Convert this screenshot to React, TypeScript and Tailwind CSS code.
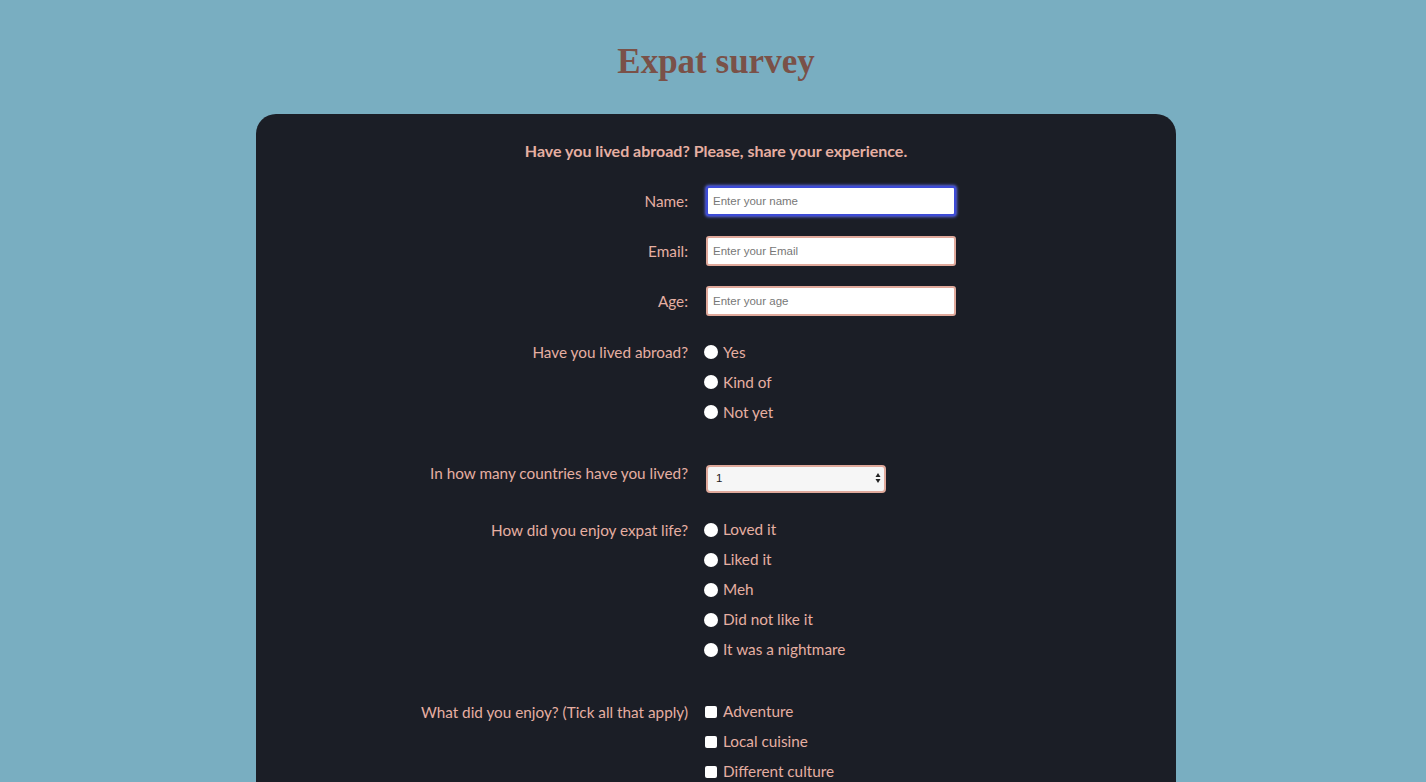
import { useState } from "react";

const labelCls = "w-[432px] shrink-0 text-right text-[15.3px] text-[#e6afa2]";
const fieldFont = { fontFamily: "'Liberation Sans', Arial, sans-serif" };

function TextRow({ label, placeholder, focused }: { label: string; placeholder: string; focused?: boolean }) {
  return (
    <div className="flex items-center h-[30px]">
      <label className={`${labelCls} leading-[30px]`}>{label}</label>
      <input
        type="text"
        placeholder={placeholder}
        style={fieldFont}
        className={`ml-[18px] w-[250px] h-[30px] rounded-[3px] bg-white px-[5px] text-[11.5px] text-[#333] placeholder:text-[#777] outline-none border-2 ${
          focused ? "border-[#3d4bd6] shadow-[0_0_3px_1px_#5a67e8]" : "border-[#e0a99b]"
        }`}
      />
    </div>
  );
}

function RadioGroup({ label, options, box }: { label: string; options: string[]; box?: boolean }) {
  const [picked, setPicked] = useState<string[]>([]);
  return (
    <div className="flex items-start">
      <div className={`${labelCls} leading-[30px]`}>{label}</div>
      <div className="ml-[16px] flex flex-col">
        {options.map((o) => (
          <label
            key={o}
            className="flex items-center h-[30px] cursor-pointer text-[15.3px] text-[#e6afa2]"
            onClick={() => setPicked(box ? (picked.includes(o) ? picked.filter((p) => p !== o) : [...picked, o]) : [o])}
          >
            {box ? (
              <span className="ml-[1px] w-[12px] h-[12px] rounded-[2px] bg-white mr-[6px] flex items-center justify-center">
                {picked.includes(o) && <span className="w-[6px] h-[6px] bg-[#1b1e26]" />}
              </span>
            ) : (
              <span className="w-[14px] h-[14px] rounded-full bg-white mr-[5px] flex items-center justify-center">
                {picked.includes(o) && <span className="w-[6px] h-[6px] rounded-full bg-[#1b1e26]" />}
              </span>
            )}
            {o}
          </label>
        ))}
      </div>
    </div>
  );
}

export default function App() {
  return (
    <div className="h-screen overflow-hidden bg-[#79aec1] pl-[6px]" style={{ fontFamily: "Lato, 'Open Sans', sans-serif" }}>
      <h1
        className="text-center text-[35px] font-bold text-[#7a5148] pt-[40px] leading-[44px]"
        style={{ fontFamily: "'Liberation Serif', 'DejaVu Serif', serif" }}
      >
        Expat survey
      </h1>
      <form className="mx-auto mt-[30px] w-[920px] rounded-[20px] bg-[#1b1e26] pt-[27px] pb-16">
        <p className="text-center text-[16px] font-bold leading-[20px] text-[#e6afa2]">
          Have you lived abroad? Please, share your experience.
        </p>
        <div className="mt-[25px] flex flex-col gap-[20px]">
          <TextRow label="Name:" placeholder="Enter your name" focused />
          <TextRow label="Email:" placeholder="Enter your Email" />
          <TextRow label="Age:" placeholder="Enter your age" />
        </div>
        <div className="mt-[21px]">
          <RadioGroup label="Have you lived abroad?" options={["Yes", "Kind of", "Not yet"]} />
        </div>
        <div className="mt-[37px] flex items-start">
          <label className={`${labelCls} leading-[18px]`}>In how many countries have you lived?</label>
          <div className="relative ml-[18px]">
            <select
              style={fieldFont}
              className="appearance-none w-[180px] h-[28px] rounded-[4px] border-2 border-[#e0a99b] bg-[#f6f6f6] pl-[8px] text-[11.5px] text-[#222] outline-none"
            >
              <option>1</option>
              <option>2</option>
              <option>3</option>
              <option>4</option>
              <option>5+</option>
            </select>
            <svg className="pointer-events-none absolute right-[5px] top-[8px]" width="6" height="12" viewBox="0 0 6 12">
              <path d="M3 1 L5.5 5 L0.5 5 Z" fill="#222" />
              <path d="M3 11 L5.5 7 L0.5 7 Z" fill="#222" />
            </svg>
          </div>
        </div>
        <div className="mt-[22px]">
          <RadioGroup
            label="How did you enjoy expat life?"
            options={["Loved it", "Liked it", "Meh", "Did not like it", "It was a nightmare"]}
          />
        </div>
        <div className="mt-[32px]">
          <RadioGroup
            box
            label="What did you enjoy? (Tick all that apply)"
            options={["Adventure", "Local cuisine", "Different culture", "Learning a language", "Meeting new people"]}
          />
        </div>
      </form>
    </div>
  );
}
